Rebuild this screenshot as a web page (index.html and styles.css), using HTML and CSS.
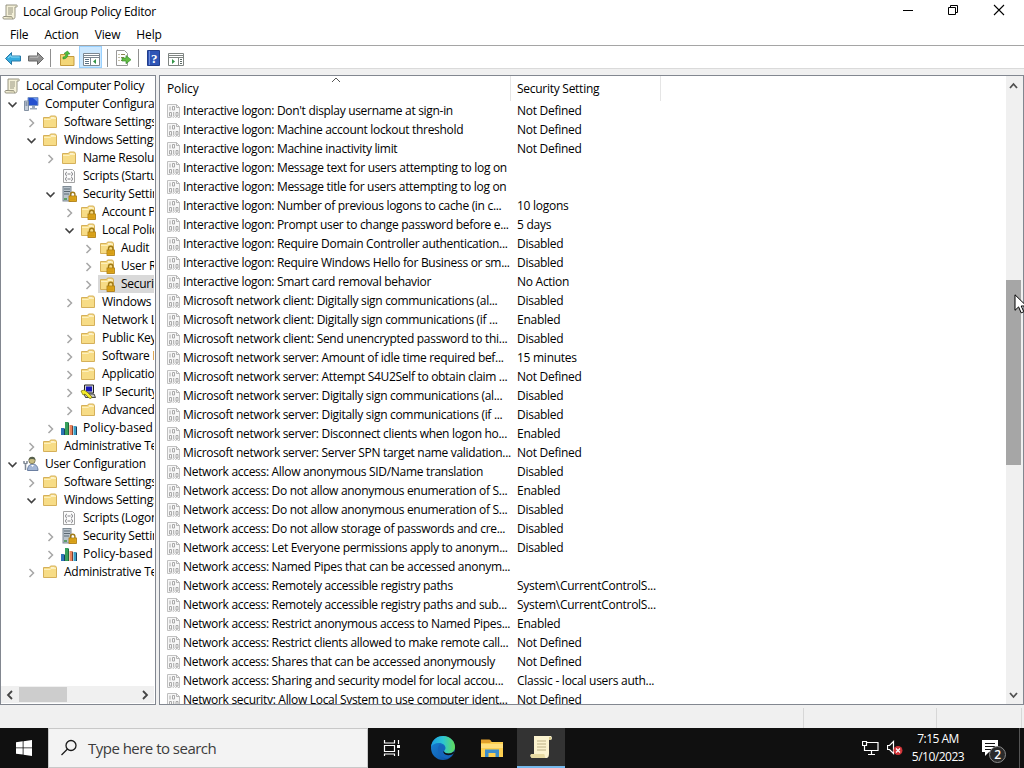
FILE: index.html
```html
<!DOCTYPE html>
<html lang="en">
<head>
    <meta charset="UTF-8">
    <meta name="viewport" content="width=device-width, initial-scale=1.0">
    <title>Local Group Policy Editor</title>
    <link rel="stylesheet" href="styles.css">
</head>
<body>
    <!-- icon set -->
    <svg class="sprite" width="0" height="0">
        <symbol id="i-scroll" viewBox="0 0 16 16">
            <path d="M4 1h10.500c1 0 1.200 2 0 2H13v9.500c0 1.500-.5 2.500-2 2.500H2c-1.500 0-1.500-2.500 0-2.500h2z" fill="#f4f0d8" stroke="#8d8a78" stroke-width=".9"/>
            <path d="M2 12.500h7.500c1 0 .5 2.500 1.500 2.500" fill="#d8d3b4" stroke="#8d8a78" stroke-width=".8"/>
            <path d="M6 4h5M6 6h5M6 8h5M6 10h4" stroke="#8f8c7a" stroke-width=".9"/>
        </symbol>
        <symbol id="i-folder" viewBox="0 0 16 16">
            <path d="M1.500 13.500v-10h6l1-1.500h5l1 1.500v10z" fill="#f7dc86" stroke="#d5b05a"/>
            <path d="M9 4h3.500" stroke="#fff" stroke-width="1.200"/>
            <path d="M2 5.500h6l1.500-1H14" fill="none" stroke="#fdf0bd"/>
        </symbol>
        <symbol id="i-lock" viewBox="0 0 16 16">
            <path d="M9.500 10V8.500a2.200 2.200 0 0 1 4.400 0V10" fill="none" stroke="#a07a18" stroke-width="1.400"/>
            <rect x="8" y="10" width="7.500" height="5.500" fill="#e5ad1c" stroke="#a9780e" stroke-width=".8"/>
            <path d="M9 12h5.500M9 13.800h5.500" stroke="#b98410" stroke-width=".6"/>
        </symbol>
        <symbol id="i-folderlock" viewBox="0 0 16 16">
            <use href="#i-folder"/>
            <use href="#i-lock"/>
        </symbol>
        <symbol id="i-serverlock" viewBox="0 0 16 16">
            <rect x="2" y=".5" width="8" height="14.500" fill="#b9c3cc" stroke="#7e8a94"/>
            <path d="M3 3h6M3 5.500h6M3 8h5" stroke="#5b6872"/>
            <path d="M3 12h3v2H3z" fill="#5d9e68"/>
            <use href="#i-lock"/>
        </symbol>
        <symbol id="i-script" viewBox="0 0 16 16">
            <path d="M2.500 1.500h9l2 2v11h-11z" fill="#fcfcfc" stroke="#a3a3a3"/>
            <path d="M6 4c-1.500 0-.5 2-2 2 1.500 0 .5 2 2 2M10 4c1.500 0 .5 2 2 2-1.500 0-.5 2-2 2M6.500 6h3M6 9c-1.500 0-.5 2-2 2 1.500 0 .5 2 2 2M10 9c1.500 0 .5 2 2 2-1.500 0-.5 2-2 2M6.500 11h3" fill="none" stroke="#77777c" stroke-width=".9"/>
        </symbol>
        <symbol id="i-chart" viewBox="0 0 16 16">
            <path d="M0 8h3v7H0z" fill="#2c74b8"/>
            <path d="M4 2h3v13H4z" fill="#36a05c"/>
            <path d="M7 2l1 1v12H7z" fill="#1d6a38"/>
            <path d="M8.500 5h2.500v10H8.500z" fill="#e8835e"/>
            <path d="M11 5l1 1v9h-1z" fill="#823c2c"/>
            <path d="M12.500 6H15v9h-2.500z" fill="#3aa0c8"/>
            <path d="M15 6l1 1v8h-1zM3 8l1 1v6H3z" fill="#173f60"/>
        </symbol>
        <symbol id="i-computer" viewBox="0 0 16 16">
            <path d="M5 1.500h10v8H5z" fill="#2450cf" stroke="#7894c4"/>
            <path d="M10 2h4.500v4z" fill="#6794ee"/>
            <path d="M9 10h3v2h2v1.500H7V12h2z" fill="#9ba9ba"/>
            <path d="M1.500 5h4v9.500h-4z" fill="#c5cdd8" stroke="#6c7c91" stroke-width=".8"/>
            <path d="M2.500 7h2M2.500 9h2" stroke="#4f627f"/>
        </symbol>
        <symbol id="i-user" viewBox="0 0 16 16">
            <path d="M4.500 14.500c0-4 2-6.500 5-6.500s5.500 2 5.500 6.500z" fill="#a3b6d6" stroke="#5f7599" stroke-width=".9"/>
            <circle cx="9" cy="4.500" r="3.200" fill="#c8bd82" stroke="#66644b" stroke-width=".7"/>
            <path d="M5.500 4c.5-4.500 7-4.500 7 0-2-1.500-5-1.500-7 0" fill="#57604c"/>
            <path d="M8 9l1.500 2L11 9" fill="#fff"/>
            <path d="M1 5v2l1.500 1L4 7V5M2.500 8v6" fill="none" stroke="#7d8794" stroke-width="1.500"/>
        </symbol>
        <symbol id="i-ipsec" viewBox="0 0 16 16">
            <path d="M4.500 1h9v8h-9z" fill="#d6d6d6" stroke="#222"/>
            <path d="M6 2.500h6v5H6z" fill="#1717b8"/>
            <path d="M4 10h10l1.500 3.500h-10z" fill="#c3c3c3" stroke="#222" stroke-width=".8"/>
            <path d="M1 7l3-1 3 2 5 5-1 1.500-2-.5-4-4-2 1z" fill="#f4ec2d" stroke="#777000" stroke-width=".7"/>
        </symbol>
        <symbol id="i-policy" viewBox="0 0 14 16">
            <path d="M.5 1.500h9l3 3v10H11l-1-1-1.500 1-1-1-1.500 1-1-1-1.500 1h-3z" fill="#f7f7f7" stroke="#c0c0c0"/>
            <path d="M9.500 1.500v3h3" fill="none" stroke="#b5b5b5"/>
            <path d="M3 3.500v4M5.500 3.500h2v3.500h-2zM2.500 9.500h2V13h-2zM6.700 9v4M9 9.500h2V13H9z" fill="none" stroke="#a0a0a0" stroke-width=".9"/>
        </symbol>
        <symbol id="i-right" viewBox="0 0 16 16">
            <path d="M5.500 5l4 4-4 4" fill="none" stroke="#a6a6a6" stroke-width="1.500"/>
        </symbol>
        <symbol id="i-down" viewBox="0 0 16 16">
            <path d="M3.500 6.500l4 4 4-4" fill="none" stroke="#404040" stroke-width="1.600"/>
        </symbol>
    </svg>

    <div class="window">
        <div class="titlebar">
            <svg class="app-icon" width="16" height="16"><use href="#i-scroll"/></svg>
            <span class="title">Local Group Policy Editor</span>
            <div class="caption-buttons">
                <svg width="46" height="23"><path d="M17 10.500h10" stroke="#000"/></svg>
                <svg width="46" height="23" fill="none" stroke="#000"><path d="M16.500 7.500h7v7h-7zM18.500 7.500v-2h7v7h-2"/></svg>
                <svg width="46" height="23"><path d="M16 5l10 10M26 5L16 15" stroke="#000" stroke-width="1.100"/></svg>
            </div>
        </div>

        <div class="menubar">
            <span>File</span>
            <span>Action</span>
            <span>View</span>
            <span>Help</span>
        </div>

        <div class="toolbar">
            <svg class="tool" width="18" height="22"><path d="M1.500 12.500l6-6v3.500h9v5h-9v3.500z" fill="#35acdf" stroke="#2878a6"/><path d="M4 12l3-2.500V11h8.500" fill="none" stroke="#8edaf5"/></svg>
            <svg class="tool forward" width="18" height="22"><path d="M16.500 12.500l-6-6v3.500h-9v5h9v3.500z" fill="#929292" stroke="#666"/><path d="M3 11.200h8V9.500" fill="none" stroke="#bdbdbd"/></svg>
            <i class="sep"></i>
            <svg class="tool up" width="18" height="22"><path d="M2.500 19.500v-11h5l1.500 2h7v9z" fill="#f3d678" stroke="#c49b3e"/><path d="M5 13c3 0 5-2 5-5h2L9.500 5 6 7.500l2 .3c0 2-1 3.200-3 3.200z" fill="#4fc13a" stroke="#31872a" stroke-width=".6"/></svg>
            <div class="tool-active">
                <svg width="22" height="21"><path d="M3.500 6.500h16v12h-16z" fill="#fff" stroke="#7c8791"/><path d="M3 8.500h17M3 10.500h17" stroke="#7c8791"/><path d="M10.500 10v9" stroke="#7c8791"/><path d="M5 12.500h4M5 14.500h4M5 16.500h4" stroke="#5e7386"/><path d="M16 12v5l-3-2.500z" fill="#339447"/></svg>
            </div>
            <i class="sep"></i>
            <svg class="tool export" width="18" height="22"><path d="M1.500 4.500h8l3 3v12h-11z" fill="#fff" stroke="#999"/><path d="M3.500 8.500h1M6 8.500h4M3.500 11.500h1M6 11.500h3M3.500 14.500h1M6 14.500h3" stroke="#8b8351"/><path d="M7 12h4V9.500l5 4.200-5 4V15H7z" fill="#63bd43" stroke="#399030" stroke-width=".7"/></svg>
            <i class="sep"></i>
            <svg class="tool help" width="14" height="22"><path d="M1.500 4.500h12v15h-12z" fill="#2f55b6" stroke="#223d8b"/><path d="M3.500 5v14" stroke="#6e8bd8"/><text x="5" y="17" class="help-mark">?</text></svg>
            <svg class="tool pane" width="18" height="22"><path d="M1.500 7.500h15v12h-15z" fill="#fff" stroke="#7f8582"/><path d="M1 9.500h16M1 11.500h16M11.500 11v9" stroke="#7f8582"/><path d="M13 13.500h2M13 15.500h2M13 17.500h2" stroke="#5d6a65"/><path d="M5 13v5l3-2.500z" fill="#339447"/></svg>
        </div>

        <div class="content">
            <div class="tree-pane">
                <div class="tree" id="tree"></div>
                <div class="hscroll">
                    <svg width="18" height="16"><path d="M11 4L7 8l4 4" fill="none" stroke="#444" stroke-width="1.800"/></svg>
                    <div class="hthumb"></div>
                    <svg width="18" height="16"><path d="M7 4l4 4-4 4" fill="none" stroke="#444" stroke-width="1.800"/></svg>
                </div>
            </div>
            <div class="list-pane">
                <div class="list">
                    <div class="list-head">
                        <div class="col-policy">Policy
                            <svg class="sort" width="10" height="6"><path d="M1 5l4-4 4 4" fill="none" stroke="#555"/></svg>
                        </div>
                        <div class="col-setting">Security Setting</div>
                    </div>
                    <div class="list-body" id="list"></div>
                </div>
                <div class="vscroll">
                    <svg width="16" height="20"><path d="M4 12l3.500-4 3.500 4" fill="none" stroke="#505050" stroke-width="1.800"/></svg>
                    <div class="vtrack"><div class="vthumb"></div></div>
                    <svg width="16" height="17"><path d="M4 6l3.500 4L11 6" fill="none" stroke="#505050" stroke-width="1.800"/></svg>
                </div>
            </div>
        </div>

        <div class="statusbar">
            <div class="status-main"></div>
            <div class="status-mid"></div>
            <div class="status-end"></div>
        </div>
    </div>

    <div class="taskbar">
        <div class="start">
            <svg width="16" height="16" fill="#fff"><path d="M0 2.300L6.700 1.300V7.500H0zM7.500 1.200L16 0v7.500H7.500zM0 8.300h6.700v6.300L0 13.700zM7.500 8.300H16V16l-8.500-1.200z"/></svg>
        </div>
        <div class="search">
            <svg width="18" height="18" fill="none" stroke="#1a1a1a" stroke-width="1.300"><circle cx="11" cy="6.500" r="5"/><path d="M7.500 10L1.500 16"/></svg>
            <span>Type here to search</span>
        </div>
        <div class="task">
            <svg width="18" height="18" fill="none" stroke="#fff" stroke-width="1.200"><path d="M1.500 1v3h10V1M1.500 6.500h10v6h-10zM1.500 17v-2h10v2M15.500 1v4M15.500 11v6"/><path d="M14 6h3v3h-3z" fill="#fff" stroke="none"/></svg>
        </div>
        <div class="task edge">
            <svg width="26" height="26" viewBox="0 0 26 26">
                <defs>
                    <linearGradient id="eg1" x1="0" x2="1"><stop offset="0" stop-color="#1b9de2"/><stop offset=".5" stop-color="#2cc5d2"/><stop offset="1" stop-color="#62dc58"/></linearGradient>
                    <linearGradient id="eg2" x1="0" x2="1" y2="1"><stop offset="0" stop-color="#1a87d8"/><stop offset="1" stop-color="#0b4da2"/></linearGradient>
                </defs>
                <circle cx="13" cy="13" r="12" fill="url(#eg2)"/>
                <path d="M1 12C2 4 8 1 13 1c8 0 12 6 12 11 0 4-3 6.500-6.500 6.500-3 0-4.500-1.300-4.500-2.200 0-.8 1.500-1.300 1.500-3.300 0-2.500-2.500-5-6.500-5-4 0-7 2-8 4z" fill="url(#eg1)"/>
                <path d="M9.500 9.500c-4 6 0 13 7 14 3-.5 5.500-2.500 6.500-4.500-3 1.500-9 1-10-3-.3-2 1-3 .5-4.500-.5-1.500-2-2-4-2z" fill="#1565bb"/>
                <path d="M14 16.300c0 1 1.500 2.200 4.500 2.200 2.500 0 4-1 5-2l.8 1.500c-4 3.500-9.800 2.500-10.800-.5-.3-.8 0-1.200.5-1.200z" fill="#111"/>
            </svg>
        </div>
        <div class="task">
            <svg width="22" height="20"><path d="M0 2h9l1.500 2H22v15H0z" fill="#fccf50"/><path d="M0 1.500h8.500l2 2-1.500 1.500H0z" fill="#e2a02c"/><path d="M0 6h22v4H0z" fill="#ffdf7c"/><path d="M4 19v-7.500h14V19h-3.500v-4h-7v4z" fill="#3b8dcb"/></svg>
        </div>
        <div class="task active">
            <svg width="24" height="26" viewBox="0 0 24 26"><path d="M5 2h17c1.500 1 1 3.500 0 4h-2v13c0 3-.5 5-3 5H3c-2-1-2-4 0-4h2z" fill="#fbf3cf"/><path d="M3 20h12c1 0 .5 4 2 4H3c-2-1-2-4 0-4z" fill="#e7daa2"/><path d="M20 3h2v3h-2z" fill="#d8ca8e"/><path d="M8 7h9M8 10h9M8 13h9M8 16h9" stroke="#bdb186"/></svg>
        </div>
        <div class="tray">
            <svg class="net" width="18" height="16" fill="none" stroke="#fff" stroke-width="1.200"><path d="M5 2.500h11v8H5M9.500 10.500V14M6 14.500h7M.5 1.500h4v4h-4zM2.500 6v4.500H6"/></svg>
            <svg class="vol" width="18" height="16"><path d="M.5 5.500h2l4-4v12l-4-4h-2z" fill="none" stroke="#fff" stroke-width="1.200"/><circle cx="11" cy="10.500" r="4.500" fill="#d13438"/><path d="M9 8.500l4 4M13 8.500l-4 4" stroke="#fff" stroke-width="1.200"/></svg>
            <div class="clock">
                <span>7:15 AM</span>
                <span>5/10/2023</span>
            </div>
            <div class="notify">
                <svg width="17" height="18"><path d="M0 1h16v12H7l-4 4v-4H0z" fill="#fff"/><path d="M3 4.500h10M3 7.500h10M3 10.500h7" stroke="#111"/></svg>
                <span class="badge">2</span>
            </div>
            <i class="show-desktop"></i>
        </div>
    </div>

    <svg class="cursor" width="14" height="20"><path d="M1 .8v15.500l3.600-3.400 2.600 6 2.600-1.200-2.600-5.700H12.500z" fill="#fff" stroke="#000"/></svg>

    <script>
        // level, arrow, icon, label
        const tree = [
            [0, "", "scroll", "Local Computer Policy"],
            [1, "down", "computer", "Computer Configuration"],
            [2, "right", "folder", "Software Settings"],
            [2, "down", "folder", "Windows Settings"],
            [3, "right", "folder", "Name Resolution Policy"],
            [3, "", "script", "Scripts (Startup/Shutdown)"],
            [3, "down", "serverlock", "Security Settings"],
            [4, "right", "folderlock", "Account Policies"],
            [4, "down", "folderlock", "Local Policies"],
            [5, "right", "folderlock", "Audit"],
            [5, "right", "folderlock", "User Rights Assignment"],
            [5, "right", "folderlock", "Security Options"],
            [4, "right", "folder", "Windows"],
            [4, "", "folder", "Network List Manager Policies"],
            [4, "right", "folder", "Public Key Policies"],
            [4, "right", "folder", "Software Restriction Policies"],
            [4, "right", "folder", "Application Control Policies"],
            [4, "right", "ipsec", "IP Security Policies"],
            [4, "right", "folder", "Advanced Audit Policy"],
            [3, "right", "chart", "Policy-based"],
            [2, "right", "folder", "Administrative Templates"],
            [1, "down", "user", "User Configuration"],
            [2, "right", "folder", "Software Settings"],
            [2, "down", "folder", "Windows Settings"],
            [3, "", "script", "Scripts (Logon/Logoff)"],
            [3, "right", "serverlock", "Security Settings"],
            [3, "right", "chart", "Policy-based"],
            [2, "right", "folder", "Administrative Templates"]
        ];

        const policies = [
            ["Interactive logon: Don't display username at sign-in", "Not Defined"],
            ["Interactive logon: Machine account lockout threshold", "Not Defined"],
            ["Interactive logon: Machine inactivity limit", "Not Defined"],
            ["Interactive logon: Message text for users attempting to log on", ""],
            ["Interactive logon: Message title for users attempting to log on", ""],
            ["Interactive logon: Number of previous logons to cache (in c...", "10 logons"],
            ["Interactive logon: Prompt user to change password before e...", "5 days"],
            ["Interactive logon: Require Domain Controller authentication...", "Disabled"],
            ["Interactive logon: Require Windows Hello for Business or sm...", "Disabled"],
            ["Interactive logon: Smart card removal behavior", "No Action"],
            ["Microsoft network client: Digitally sign communications (al...", "Disabled"],
            ["Microsoft network client: Digitally sign communications (if ...", "Enabled"],
            ["Microsoft network client: Send unencrypted password to thi...", "Disabled"],
            ["Microsoft network server: Amount of idle time required bef...", "15 minutes"],
            ["Microsoft network server: Attempt S4U2Self to obtain claim ...", "Not Defined"],
            ["Microsoft network server: Digitally sign communications (al...", "Disabled"],
            ["Microsoft network server: Digitally sign communications (if ...", "Disabled"],
            ["Microsoft network server: Disconnect clients when logon ho...", "Enabled"],
            ["Microsoft network server: Server SPN target name validation...", "Not Defined"],
            ["Network access: Allow anonymous SID/Name translation", "Disabled"],
            ["Network access: Do not allow anonymous enumeration of S...", "Enabled"],
            ["Network access: Do not allow anonymous enumeration of S...", "Disabled"],
            ["Network access: Do not allow storage of passwords and cre...", "Disabled"],
            ["Network access: Let Everyone permissions apply to anonym...", "Disabled"],
            ["Network access: Named Pipes that can be accessed anonym...", ""],
            ["Network access: Remotely accessible registry paths", "System\\CurrentControlS..."],
            ["Network access: Remotely accessible registry paths and sub...", "System\\CurrentControlS..."],
            ["Network access: Restrict anonymous access to Named Pipes...", "Enabled"],
            ["Network access: Restrict clients allowed to make remote call...", "Not Defined"],
            ["Network access: Shares that can be accessed anonymously", "Not Defined"],
            ["Network access: Sharing and security model for local accou...", "Classic - local users auth..."],
            ["Network security: Allow Local System to use computer ident...", "Not Defined"]
        ];

        document.getElementById("tree").innerHTML = tree.map(function(n, i) {
            const arrow = n[1] ? `<use href="#i-${n[1]}"/>` : "";
            return `<div class="node level${n[0]}${i === 11 ? " selected" : ""}">
                <svg class="arrow" width="16" height="16">${arrow}</svg>
                <div class="node-body">
                    <svg width="16" height="16"><use href="#i-${n[2]}"/></svg>
                    <span class="${n[2]}">${n[3]}</span>
                </div>
            </div>`;
        }).join("");

        document.getElementById("list").innerHTML = policies.map(function(p) {
            return `<div class="row">
                <svg width="14" height="16"><use href="#i-policy"/></svg>
                <span class="name">${p[0]}</span>
                <span class="setting">${p[1]}</span>
            </div>`;
        }).join("");
    </script>
</body>
</html>
```
FILE: styles.css
```css
* {
    box-sizing: border-box;
}
body {
    margin: 0;
    width: 1024px;
    height: 768px;
    overflow: hidden;
    font-family: "Open Sans", "Noto Sans", sans-serif;
    font-size: 12px;
    letter-spacing: -0.27px;
    color: #000;
    background: #f0f0f0;
    display: flex;
    flex-direction: column;
}
svg {
    display: block;
    flex: none;
}
.sprite {
    position: absolute;
}
.window {
    height: 728px;
    display: flex;
    flex-direction: column;
}

/* title, menu, toolbar */
.titlebar {
    height: 23px;
    background: #fff;
    display: flex;
    align-items: center;
    padding-left: 2px;
}
.title {
    margin-left: 5px;
}
.caption-buttons {
    margin-left: auto;
    display: flex;
}
.menubar {
    height: 22px;
    background: #fff;
    display: flex;
    align-items: center;
    padding-left: 10px;
    gap: 16px;
    letter-spacing: -0.15px;
}
.toolbar {
    height: 24px;
    background: #fff;
    border-top: 1px solid #a5a5a5;
    border-bottom: 1px solid #dadada;
    display: flex;
    padding-left: 4px;
}
.forward {
    margin-left: 5px;
}
.sep {
    width: 1px;
    height: 18px;
    margin: 3px 7px 0 5px;
    background: #8f8f8f;
}
.tool-active {
    width: 23px;
    height: 22px;
    margin-left: 3px;
    background: #cce8ff;
    border: 1px solid #99d1ff;
}
.help-mark {
    font: bold 13px "Liberation Serif", serif;
    fill: #fff;
}
.pane {
    margin-left: 7px;
}

/* panes */
.content {
    height: 636px;
    padding-top: 6px;
    display: flex;
    gap: 3px;
}
.tree-pane {
    width: 156px;
    border: 1px solid #828790;
    background: #fff;
    display: flex;
    flex-direction: column;
}
.tree {
    flex: 1;
    overflow: hidden;
    margin-right: 1px;
    padding-top: 1px;
}
.node {
    height: 18px;
    display: flex;
    align-items: center;
    gap: 1px;
    white-space: nowrap;
}
.node-body {
    height: 18px;
    display: flex;
    align-items: center;
    gap: 6px;
    padding-left: 1px;
    flex: 1 0 auto;
}
.node-body span {
    line-height: 16px;
    padding-bottom: 1px;
}
.node-body .chart {
    letter-spacing: 0;
}
.selected .node-body {
    background: #d9d9d9;
}
.level0 { padding-left: 2px; }
.level0 .arrow { display: none; }
.level1 { padding-left: 4px; }
.level2 { padding-left: 23px; }
.level3 { padding-left: 42px; }
.level4 { padding-left: 61px; }
.level5 { padding-left: 80px; }
.hscroll {
    height: 17px;
    margin: 0 1px 1px 0;
    background: #f0f0f0;
    display: flex;
    align-items: center;
}
.hthumb {
    width: 48px;
    height: 15px;
    margin-right: auto;
    background: #cdcdcd;
}
.list-pane {
    flex: 1;
    border: 1px solid #828790;
    background: #fff;
    display: flex;
    overflow: hidden;
}
.list {
    flex: 1;
    overflow: hidden;
}
.list-head {
    height: 25px;
    display: flex;
    line-height: 25px;
}
.col-policy {
    position: relative;
    width: 351px;
    padding-left: 7px;
    border-right: 1px solid #e5e5e5;
    letter-spacing: -0.1px;
}
.sort {
    position: absolute;
    left: 171px;
    top: 1px;
}
.col-setting {
    width: 150px;
    padding-left: 6px;
    border-right: 1px solid #e5e5e5;
}
.row {
    height: 19px;
    display: flex;
    align-items: center;
    padding-left: 7px;
    white-space: nowrap;
}
.name {
    width: 334px;
    padding-left: 2px;
    letter-spacing: -0.31px;
}
.setting {
    padding-left: 2px;
}
.vscroll {
    width: 17px;
    padding-right: 1px;
    background: #f0f0f0;
    display: flex;
    flex-direction: column;
}
.vtrack {
    flex: 1;
    padding-top: 184px;
}
.vthumb {
    height: 185px;
    width: 15px;
    background: #a6a6a6;
}
.statusbar {
    height: 23px;
    display: flex;
    padding-top: 3px;
}
.status-main {
    width: 804px;
    border-right: 1px solid #d7d7d7;
}
.status-mid {
    width: 133px;
    border-right: 1px solid #d7d7d7;
}
.status-end {
    width: 85px;
    border-right: 1px solid #d7d7d7;
}

/* taskbar */
.taskbar {
    height: 40px;
    background: #101010;
    color: #fff;
    display: flex;
}
.start {
    width: 48px;
    display: flex;
    align-items: center;
    justify-content: center;
}
.search {
    width: 320px;
    background: #f3f3f3;
    border: 1px solid #c8c8c8;
    display: flex;
    align-items: center;
    gap: 10px;
    padding-left: 11px;
    color: #3c3c3c;
    font-size: 15px;
    letter-spacing: -0.52px;
}
.task {
    width: 48px;
    display: flex;
    align-items: center;
    justify-content: center;
    margin-right: 1px;
}
.edge {
    margin-left: 2px;
}
.active {
    background: #333;
    border-bottom: 2px solid #76b9ed;
}
.tray {
    margin-left: auto;
    display: flex;
    align-items: center;
}
.net {
    margin-right: 7px;
}
.clock {
    width: 66px;
    display: flex;
    flex-direction: column;
    align-items: center;
    line-height: 18px;
    margin-right: 11px;
    letter-spacing: -0.5px;
}
.notify {
    position: relative;
    width: 37px;
}
.badge {
    position: absolute;
    left: 7px;
    top: 7px;
    width: 17px;
    height: 17px;
    border: 1px solid #8a8a8a;
    border-radius: 50%;
    background: #2b2b2b;
    line-height: 15px;
    font-size: 12px;
    font-weight: 600;
    text-align: center;
}
.show-desktop {
    width: 5px;
    height: 40px;
    border-left: 1px solid #555;
}
.cursor {
    position: absolute;
    left: 1014px;
    top: 294px;
}
```
